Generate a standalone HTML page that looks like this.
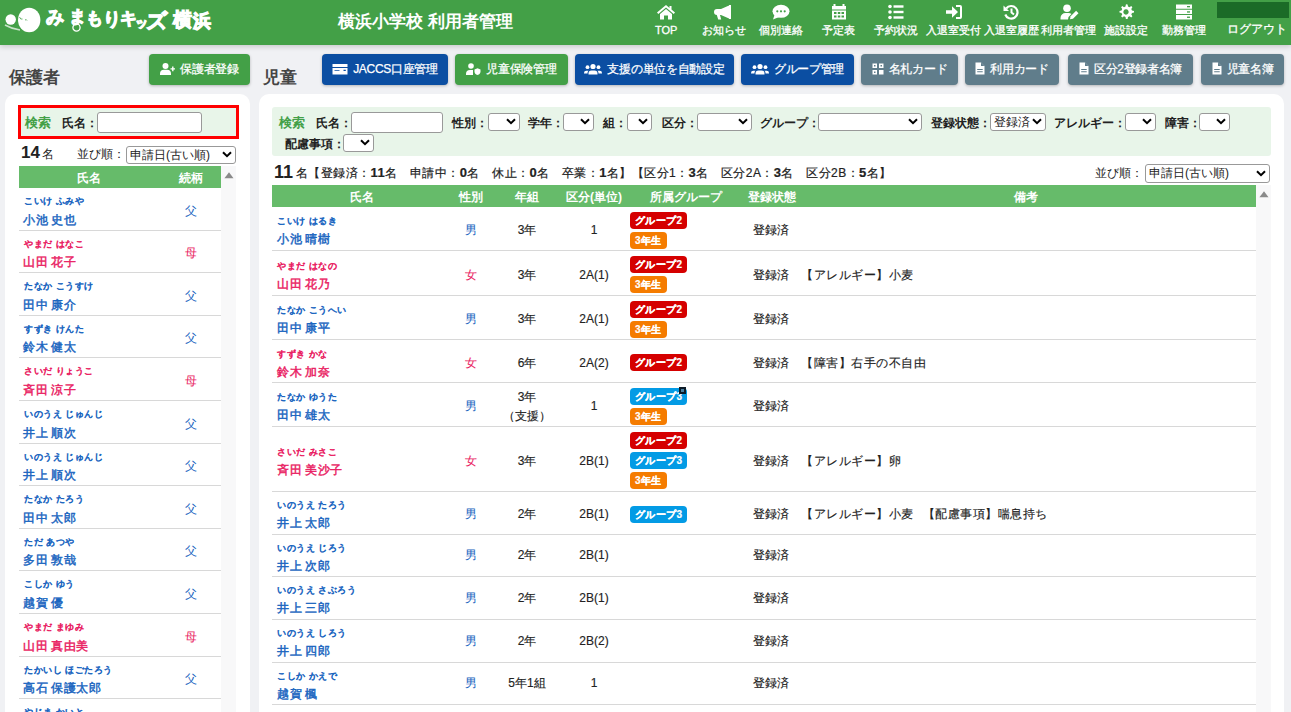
<!DOCTYPE html><html><head><meta charset="utf-8"><style>
*{box-sizing:border-box;margin:0;padding:0}
html,body{width:1291px;height:712px;overflow:hidden;background:#f0f1f4;font-family:"Liberation Sans",sans-serif;color:#222}
.abs{position:absolute}
.cnt b{font-size:13px}
.lg{font-weight:bold;color:#fff;white-space:nowrap;-webkit-text-stroke:1.1px #fff}
#hdr{position:absolute;left:0;top:0;width:1291px;height:45px;background:#43a047;box-shadow:0 2px 5px rgba(0,0,0,.16)}
.nav{position:absolute;top:0;width:58px;height:44px;text-align:center;color:#fff}
.nav svg{position:absolute;left:19px;top:4px}
.nav span{position:absolute;left:-10px;right:-10px;top:23px;font-size:11px;line-height:14px;white-space:nowrap;-webkit-text-stroke:0.3px #fff}
.title{position:absolute;font-size:17px;font-weight:bold;color:#444;line-height:20px}
.btn{position:absolute;top:54px;height:31px;border-radius:4px;color:#fff;font-size:12px;letter-spacing:-0.3px;-webkit-text-stroke:0.25px #fff;line-height:31px;text-align:center;box-shadow:0 1px 3px rgba(0,0,0,.25);white-space:nowrap}
.btn svg{vertical-align:-2px;margin-right:5px}
.card{position:absolute;background:#fff;border-radius:10px}
.lbl{position:absolute;font-size:12px;font-weight:bold;line-height:14px;white-space:nowrap;color:#222}
.sel{position:absolute;background:#fff;border:1px solid #999;border-radius:3px}
.sel .st{position:absolute;left:3px;top:0;font-size:12px;color:#222;line-height:17px;white-space:nowrap}
.sel .chev{position:absolute;right:3px;top:50%;margin-top:-4px}
.inp{position:absolute;background:#fff;border:1px solid #999;border-radius:3px}
.kana{position:absolute;font-size:9px;letter-spacing:0.5px;-webkit-text-stroke:0.55px currentColor;line-height:12px;white-space:nowrap}
.nm{position:absolute;font-size:12px;letter-spacing:0.6px;word-spacing:-1px;-webkit-text-stroke:0.45px currentColor;line-height:16px;white-space:nowrap}
.m{color:#1a65c0}.f{color:#e91e63}
.c.m,.c.f{-webkit-text-stroke:0}
.th{position:absolute;margin-top:1px;color:#fff;font-size:12px;font-weight:bold;line-height:22px;text-align:center;white-space:nowrap}
.row{position:absolute;border-bottom:1px solid #d8d8d8}
.c{position:absolute;-webkit-text-stroke:0.15px currentColor;font-size:12px;line-height:16px;text-align:center;white-space:nowrap}
.bd{position:absolute;height:17px;border-radius:4px;color:#fff;font-size:10px;letter-spacing:0.35px;font-weight:bold;-webkit-text-stroke:0.2px #fff;line-height:17px;padding:0 5px;white-space:nowrap}
.r{background:#d50000}.b{background:#039be5}.o{background:#f57c00}
</style></head><body>
<div id="hdr">
<svg class="abs" style="left:0;top:0" width="46" height="44" viewBox="0 0 46 44">
<ellipse cx="29.2" cy="20" rx="11.2" ry="12.2" fill="#fff"/>
<circle cx="10.7" cy="19.5" r="5.2" fill="#fff"/>
<path d="M5 25 Q12 29 20 30" stroke="#fff" stroke-width="1.5" fill="none" opacity=".7"/>
<path d="M19.5 17 q1 3 3 2 M25 20 q1.5-1 2 0.5" stroke="#43a047" stroke-width="0.8" fill="none"/>
</svg>
<div class="abs lg" style="left:45.5px;top:8px;font-size:18px;line-height:18px">み</div>
<div class="abs lg" style="left:68.5px;top:8px;font-size:17px;line-height:17px">ま</div>
<div class="abs lg" style="left:85.5px;top:10px;font-size:17px;line-height:17px">も</div>
<div class="abs lg" style="left:103px;top:10px;font-size:18px;line-height:18px">り</div>
<div class="abs lg" style="left:119.5px;top:10px;font-size:17px;line-height:17px">キ</div>
<div class="abs lg" style="left:135px;top:16px;font-size:13px;line-height:13px">ッ</div>
<div class="abs lg" style="left:146px;top:10px;font-size:21px;line-height:21px">ズ</div>
<div class="abs lg" style="left:173px;top:11px;font-size:18.5px;line-height:18.5px">横</div>
<div class="abs lg" style="left:193px;top:12px;font-size:18px;line-height:18px">浜</div>
<svg class="abs" style="left:71.5px;top:23px" width="9" height="9" viewBox="0 0 9 9"><circle cx="4.5" cy="4.5" r="3.6" fill="none" stroke="#fff" stroke-width="1.3"/></svg>
<div class="abs" style="left:338px;top:11px;font-size:17px;font-weight:bold;color:#fff;line-height:22px;white-space:nowrap">横浜小学校 利用者管理</div>
<div class="nav" style="left:637.25px"><svg width="20" height="16" viewBox="0 0 20 16"><path d="M10 1 L1 8.5 L2.3 10 L10 3.6 L17.7 10 L19 8.5 L15.5 5.6 V2 H13.5 V3.9 Z" fill="#fff"/><path d="M4 10 L10 5 L16 10 V15.5 H12 V11.5 H8 V15.5 H4 Z" fill="#fff"/></svg><span>TOP</span></div>
<div class="nav" style="left:694.75px"><svg width="20" height="16" viewBox="0 0 20 16"><path d="M15 1 h2 v14 h-2 z M3 5 h4 l8-3.5 v13 l-8-3.5 h-1 l1.2 4.5 h-3 l-1.4-4.5 H3 a3 3 0 0 1 0-6z" fill="#fff"/></svg><span>お知らせ</span></div>
<div class="nav" style="left:752.25px"><svg width="20" height="16" viewBox="0 0 20 16"><ellipse cx="10" cy="7.3" rx="8.5" ry="6.5" fill="#fff"/><path d="M3.5 11 L2 15.5 L8 13 Z" fill="#fff"/><circle cx="6.3" cy="7.3" r="1.1" fill="#43a047"/><circle cx="10" cy="7.3" r="1.1" fill="#43a047"/><circle cx="13.7" cy="7.3" r="1.1" fill="#43a047"/></svg><span>個別連絡</span></div>
<div class="nav" style="left:809.75px"><svg width="20" height="16" viewBox="0 0 20 16"><rect x="4.5" y="0" width="2" height="3" fill="#fff"/><rect x="13.5" y="0" width="2" height="3" fill="#fff"/><rect x="3" y="2" width="14" height="3.5" fill="#fff"/><path d="M3 6.5 h14 v9 h-14z M5 8 v2 h2.5 v-2z M8.8 8 v2 h2.5 v-2z M12.5 8 v2 h2.5 v-2z M5 11.5 v2 h2.5 v-2z M8.8 11.5 v2 h2.5 v-2z M12.5 11.5 v2 h2.5 v-2z" fill="#fff" fill-rule="evenodd"/></svg><span>予定表</span></div>
<div class="nav" style="left:867.25px"><svg width="20" height="16" viewBox="0 0 20 16"><circle cx="4" cy="2.5" r="1.8" fill="#fff"/><circle cx="4" cy="8" r="1.8" fill="#fff"/><circle cx="4" cy="13.5" r="1.8" fill="#fff"/><rect x="7.5" y="1.3" width="10" height="2.4" fill="#fff"/><rect x="7.5" y="6.8" width="10" height="2.4" fill="#fff"/><rect x="7.5" y="12.3" width="10" height="2.4" fill="#fff"/></svg><span>予約状況</span></div>
<div class="nav" style="left:924.75px"><svg width="20" height="16" viewBox="0 0 20 16"><path d="M2 6.3 h6 v-4 l6 5.7 l-6 5.7 v-4 h-6z" fill="#fff"/><path d="M12 1 h4 a2 2 0 0 1 2 2 v10 a2 2 0 0 1-2 2 h-4 v-2 h4 v-10 h-4z" fill="#fff"/></svg><span>入退室受付</span></div>
<div class="nav" style="left:982.25px"><svg width="20" height="16" viewBox="0 0 20 16"><path d="M5.2 4.5 A6.3 6.3 0 1 1 4.3 10.5" fill="none" stroke="#fff" stroke-width="2.2"/><path d="M2.5 1.5 L2.5 7 L8 7 Z" fill="#fff"/><path d="M10.5 4.5 v4 l2.5 2" fill="none" stroke="#fff" stroke-width="2"/></svg><span>入退室履歴</span></div>
<div class="nav" style="left:1039.75px"><svg width="20" height="16" viewBox="0 0 20 16"><circle cx="8" cy="4.2" r="3.8" fill="#fff"/><path d="M1.5 15.5 v-1.5 a5 5 0 0 1 5-5 h3 a5 5 0 0 1 3 1 l-3 3 l-0.5 2.5z" fill="#fff"/><path d="M11 15.3 l0.6-3 l5.5-5.5 l2.4 2.4 l-5.5 5.5z" fill="#fff"/></svg><span>利用者管理</span></div>
<div class="nav" style="left:1097.25px"><svg width="20" height="16" viewBox="0 0 20 16"><path d="M10 0.3 l1.6 0.2 l0.4 2 l1.5 0.7 l1.7-1.1 l1.2 1.2 l-1.1 1.7 l0.7 1.5 l2 0.4 v1.7 l-2 0.4 l-0.7 1.5 l1.1 1.7 l-1.2 1.2 l-1.7-1.1 l-1.5 0.7 l-0.4 2 h-1.7 l-0.4-2 l-1.5-0.7 l-1.7 1.1 l-1.2-1.2 l1.1-1.7 l-0.7-1.5 l-2-0.4 v-1.7 l2-0.4 l0.7-1.5 l-1.1-1.7 l1.2-1.2 l1.7 1.1 l1.5-0.7 l0.4-2z M10 5.3 a2.7 2.7 0 1 0 0.01 0z" fill="#fff" fill-rule="evenodd"/></svg><span>施設設定</span></div>
<div class="nav" style="left:1154.75px"><svg width="20" height="16" viewBox="0 0 20 16"><path d="M2 0.5 h16 v4.3 h-16z M2 5.8 h16 v4.3 h-16z M2 11.1 h16 v4.3 h-16z" fill="#fff"/><rect x="13" y="2" width="3" height="1.3" fill="#43a047"/><rect x="13" y="7.3" width="3" height="1.3" fill="#43a047"/><rect x="13" y="12.6" width="3" height="1.3" fill="#43a047"/></svg><span>勤務管理</span></div>
<div class="abs" style="left:1217px;top:2px;width:72px;height:16px;background:#1b6b27"></div>
<div class="abs" style="left:1217px;top:21px;width:80px;font-size:12px;color:#fff;line-height:16px;text-align:center;white-space:nowrap;-webkit-text-stroke:0.3px #fff">ログアウト</div>
</div>
<div class="title" style="left:9px;top:68px">保護者</div>
<div class="title" style="left:263px;top:68px">児童</div>
<div class="btn" style="left:149px;width:101px;background:#43a047"><svg width="15" height="12" viewBox="0 0 15 12"><circle cx="5.5" cy="3" r="3" fill="#fff"/><path d="M0 12 v-1.2 a4 4 0 0 1 4-4 h3 a4 4 0 0 1 4 4 v1.2z" fill="#fff"/><path d="M10.5 5.2 h1.6 v-1.6 h1.4 v1.6 h1.6 v1.4 h-1.6 v1.6 h-1.4 v-1.6 h-1.6z" fill="#fff"/></svg>保護者登録</div>
<div class="btn" style="left:322px;width:126px;background:#0b4ea2"><svg width="16" height="12" viewBox="0 0 16 12"><path d="M0.5 1 h15 v10.5 h-15z M0.5 4 v0.9 h15 v-0.9z M2.5 7 v0.7 h5 v-0.7z M11.5 6.8 v1.2 h2.3 v-1.2z" fill="#fff" fill-rule="evenodd"/></svg>JACCS口座管理</div>
<div class="btn" style="left:455px;width:113px;background:#43a047"><svg width="15" height="12" viewBox="0 0 15 12"><circle cx="5" cy="3" r="2.8" fill="#fff"/><path d="M0 12 v-1 a4 4 0 0 1 4-4 h3 v5z" fill="#fff"/><path d="M8.5 6.5 l3-1.2 l3 1.2 v2 a3.5 3.5 0 0 1-3 3.4 a3.5 3.5 0 0 1-3-3.4z" fill="#fff"/></svg>児童保険管理</div>
<div class="btn" style="left:575px;width:159px;background:#0b4ea2"><svg width="18" height="12" viewBox="0 0 18 12"><circle cx="9" cy="3.5" r="2.6" fill="#fff"/><circle cx="3.5" cy="4.2" r="1.9" fill="#fff"/><circle cx="14.5" cy="4.2" r="1.9" fill="#fff"/><path d="M4.5 11.5 v-1 a3 3 0 0 1 3-3 h3 a3 3 0 0 1 3 3 v1z" fill="#fff"/><path d="M0 10.5 v-0.5 a2.3 2.3 0 0 1 2.3-2.3 h2.2 a3.5 3.5 0 0 0-1 2.8z M18 10.5 v-0.5 a2.3 2.3 0 0 0-2.3-2.3 h-2.2 a3.5 3.5 0 0 1 1 2.8z" fill="#fff"/></svg>支援の単位を自動設定</div>
<div class="btn" style="left:741px;width:113px;background:#0b4ea2"><svg width="18" height="12" viewBox="0 0 18 12"><circle cx="9" cy="3.5" r="2.6" fill="#fff"/><circle cx="3.5" cy="4.2" r="1.9" fill="#fff"/><circle cx="14.5" cy="4.2" r="1.9" fill="#fff"/><path d="M4.5 11.5 v-1 a3 3 0 0 1 3-3 h3 a3 3 0 0 1 3 3 v1z" fill="#fff"/><path d="M0 10.5 v-0.5 a2.3 2.3 0 0 1 2.3-2.3 h2.2 a3.5 3.5 0 0 0-1 2.8z M18 10.5 v-0.5 a2.3 2.3 0 0 0-2.3-2.3 h-2.2 a3.5 3.5 0 0 1 1 2.8z" fill="#fff"/></svg>グループ管理</div>
<div class="btn" style="left:861px;width:97px;background:#607d8b"><svg width="12" height="12" viewBox="0 0 12 12"><path d="M0.5 0.5 h4.5 v4.5 h-4.5z M7 0.5 h4.5 v4.5 h-4.5z M0.5 7 h4.5 v4.5 h-4.5z M7 7 h4.5 v4.5 h-4.5z M2 2 v1.5 h1.5 v-1.5z M8.5 2 v1.5 h1.5 v-1.5z M2 8.5 v1.5 h1.5 v-1.5z" fill="#fff" fill-rule="evenodd"/></svg>名札カード</div>
<div class="btn" style="left:965px;width:94px;background:#607d8b"><svg width="10" height="13" viewBox="0 0 10 13"><path d="M0.5 0.5 h5.5 l3.5 3.5 v8.5 h-9z M2.2 7 v1 h5.5 v-1z M2.2 9.2 v1 h5.5 v-1z" fill="#fff" fill-rule="evenodd"/><path d="M6 0.5 v3.5 h3.5" fill="#607d8b"/></svg>利用カード</div>
<div class="btn" style="left:1068px;width:125px;background:#607d8b"><svg width="10" height="13" viewBox="0 0 10 13"><path d="M0.5 0.5 h5.5 l3.5 3.5 v8.5 h-9z M2.2 7 v1 h5.5 v-1z M2.2 9.2 v1 h5.5 v-1z" fill="#fff" fill-rule="evenodd"/><path d="M6 0.5 v3.5 h3.5" fill="#607d8b"/></svg>区分2登録者名簿</div>
<div class="btn" style="left:1201px;width:83px;background:#607d8b"><svg width="10" height="13" viewBox="0 0 10 13"><path d="M0.5 0.5 h5.5 l3.5 3.5 v8.5 h-9z M2.2 7 v1 h5.5 v-1z M2.2 9.2 v1 h5.5 v-1z" fill="#fff" fill-rule="evenodd"/><path d="M6 0.5 v3.5 h3.5" fill="#607d8b"/></svg>児童名簿</div>
<div class="card" style="left:5px;top:94px;width:245px;height:640px"></div>
<div class="abs" style="left:18px;top:105px;width:221px;height:34px;border:3px solid #f00;background:#e8f5e9"></div>
<div class="abs" style="left:25px;top:115px;font-size:13px;font-weight:bold;color:#43a047;line-height:16px">検索</div>
<div class="lbl" style="left:62px;top:116px">氏名：</div>
<div class="inp" style="left:97px;top:112px;width:105px;height:21px"></div>
<div class="abs" style="left:21px;top:144px;font-size:17px;font-weight:bold;line-height:18px">14</div>
<div class="abs" style="left:42px;top:147px;font-size:12px;line-height:14px">名</div>
<div class="abs" style="left:77px;top:147px;font-size:12px;line-height:14px">並び順：</div>
<div class="sel" style="left:126px;top:146px;width:110px;height:18px"><span class="st">申請日(古い順)</span><svg class="chev" width="10" height="7" viewBox="0 0 10 7"><path d="M1 1.2 L5 5.2 L9 1.2" fill="none" stroke="#000" stroke-width="2"/></svg></div>
<div class="abs" style="left:19px;top:166px;width:202px;height:22px;background:#66bb6a"></div>
<div class="th" style="left:19px;top:166px;width:140px">氏名</div>
<div class="th" style="left:161px;top:166px;width:60px">続柄</div>
<div class="abs" style="left:221px;top:166px;width:15px;height:560px;background:#f8f8f9"></div>
<svg class="abs" style="left:223.5px;top:170.5px" width="10" height="8" viewBox="0 0 11 8"><path d="M0.5 7.5 L5.5 1 L10.5 7.5Z" fill="#8a8a8a"/></svg>
<div class="row" style="left:19px;top:188.0px;width:202px;height:42.6px"><div class="kana m" style="left:5px;top:7px">こいけ ふみや</div><div class="nm m" style="left:4px;top:23.5px">小池 史也</div><div class="c m" style="left:142px;width:60px;top:14.5px">父</div></div>
<div class="row" style="left:19px;top:230.6px;width:202px;height:42.6px"><div class="kana f" style="left:5px;top:7px">やまだ はなこ</div><div class="nm f" style="left:4px;top:23.5px">山田 花子</div><div class="c f" style="left:142px;width:60px;top:14.5px">母</div></div>
<div class="row" style="left:19px;top:273.2px;width:202px;height:42.6px"><div class="kana m" style="left:5px;top:7px">たなか こうすけ</div><div class="nm m" style="left:4px;top:23.5px">田中 康介</div><div class="c m" style="left:142px;width:60px;top:14.5px">父</div></div>
<div class="row" style="left:19px;top:315.8px;width:202px;height:42.6px"><div class="kana m" style="left:5px;top:7px">すずき けんた</div><div class="nm m" style="left:4px;top:23.5px">鈴木 健太</div><div class="c m" style="left:142px;width:60px;top:14.5px">父</div></div>
<div class="row" style="left:19px;top:358.4px;width:202px;height:42.6px"><div class="kana f" style="left:5px;top:7px">さいだ りょうこ</div><div class="nm f" style="left:4px;top:23.5px">斉田 涼子</div><div class="c f" style="left:142px;width:60px;top:14.5px">母</div></div>
<div class="row" style="left:19px;top:401.0px;width:202px;height:42.6px"><div class="kana m" style="left:5px;top:7px">いのうえ じゅんじ</div><div class="nm m" style="left:4px;top:23.5px">井上 順次</div><div class="c m" style="left:142px;width:60px;top:14.5px">父</div></div>
<div class="row" style="left:19px;top:443.6px;width:202px;height:42.6px"><div class="kana m" style="left:5px;top:7px">いのうえ じゅんじ</div><div class="nm m" style="left:4px;top:23.5px">井上 順次</div><div class="c m" style="left:142px;width:60px;top:14.5px">父</div></div>
<div class="row" style="left:19px;top:486.2px;width:202px;height:42.6px"><div class="kana m" style="left:5px;top:7px">たなか たろう</div><div class="nm m" style="left:4px;top:23.5px">田中 太郎</div><div class="c m" style="left:142px;width:60px;top:14.5px">父</div></div>
<div class="row" style="left:19px;top:528.8px;width:202px;height:42.6px"><div class="kana m" style="left:5px;top:7px">ただ あつや</div><div class="nm m" style="left:4px;top:23.5px">多田 敦哉</div><div class="c m" style="left:142px;width:60px;top:14.5px">父</div></div>
<div class="row" style="left:19px;top:571.4px;width:202px;height:42.6px"><div class="kana m" style="left:5px;top:7px">こしか ゆう</div><div class="nm m" style="left:4px;top:23.5px">越賀 優</div><div class="c m" style="left:142px;width:60px;top:14.5px">父</div></div>
<div class="row" style="left:19px;top:614.0px;width:202px;height:42.6px"><div class="kana f" style="left:5px;top:7px">やまだ まゆみ</div><div class="nm f" style="left:4px;top:23.5px">山田 真由美</div><div class="c f" style="left:142px;width:60px;top:14.5px">母</div></div>
<div class="row" style="left:19px;top:656.6px;width:202px;height:42.6px"><div class="kana m" style="left:5px;top:7px">たかいし ほごたろう</div><div class="nm m" style="left:4px;top:23.5px">高石 保護太郎</div><div class="c m" style="left:142px;width:60px;top:14.5px">父</div></div>
<div class="row" style="left:19px;top:699.2px;width:202px;height:42.6px"><div class="kana m" style="left:5px;top:7px">やじま かいと</div><div class="nm m" style="left:4px;top:23.5px">矢島 海斗</div><div class="c m" style="left:142px;width:60px;top:14.5px">父</div></div>
<div class="card" style="left:259px;top:94px;width:1025px;height:640px"></div>
<div class="abs" style="left:272px;top:107px;width:999px;height:49px;background:#e8f5e9;border-radius:3px"></div>
<div class="abs" style="left:279px;top:115px;font-size:13px;font-weight:bold;color:#43a047;line-height:16px">検索</div>
<div class="lbl" style="left:316px;top:116px">氏名：</div>
<div class="inp" style="left:351px;top:112px;width:92px;height:21px"></div>
<div class="lbl" style="left:452px;top:116px">性別：</div>
<div class="sel" style="left:488px;top:113px;width:32px;height:18px"><span class="st"></span><svg class="chev" width="10" height="7" viewBox="0 0 10 7"><path d="M1 1.2 L5 5.2 L9 1.2" fill="none" stroke="#000" stroke-width="2"/></svg></div>
<div class="lbl" style="left:528px;top:116px">学年：</div>
<div class="sel" style="left:563px;top:113px;width:31px;height:18px"><span class="st"></span><svg class="chev" width="10" height="7" viewBox="0 0 10 7"><path d="M1 1.2 L5 5.2 L9 1.2" fill="none" stroke="#000" stroke-width="2"/></svg></div>
<div class="lbl" style="left:603px;top:116px">組：</div>
<div class="sel" style="left:627px;top:113px;width:25px;height:18px"><span class="st"></span><svg class="chev" width="10" height="7" viewBox="0 0 10 7"><path d="M1 1.2 L5 5.2 L9 1.2" fill="none" stroke="#000" stroke-width="2"/></svg></div>
<div class="lbl" style="left:662px;top:116px">区分：</div>
<div class="sel" style="left:697px;top:113px;width:55px;height:18px"><span class="st"></span><svg class="chev" width="10" height="7" viewBox="0 0 10 7"><path d="M1 1.2 L5 5.2 L9 1.2" fill="none" stroke="#000" stroke-width="2"/></svg></div>
<div class="lbl" style="left:760px;top:116px">グループ：</div>
<div class="sel" style="left:818px;top:113px;width:104px;height:18px"><span class="st"></span><svg class="chev" width="10" height="7" viewBox="0 0 10 7"><path d="M1 1.2 L5 5.2 L9 1.2" fill="none" stroke="#000" stroke-width="2"/></svg></div>
<div class="lbl" style="left:931px;top:116px">登録状態：</div>
<div class="sel" style="left:990px;top:113px;width:56px;height:18px"><span class="st">登録済</span><svg class="chev" width="10" height="7" viewBox="0 0 10 7"><path d="M1 1.2 L5 5.2 L9 1.2" fill="none" stroke="#000" stroke-width="2"/></svg></div>
<div class="lbl" style="left:1054px;top:116px">アレルギー：</div>
<div class="sel" style="left:1125px;top:113px;width:31px;height:18px"><span class="st"></span><svg class="chev" width="10" height="7" viewBox="0 0 10 7"><path d="M1 1.2 L5 5.2 L9 1.2" fill="none" stroke="#000" stroke-width="2"/></svg></div>
<div class="lbl" style="left:1165px;top:116px">障害：</div>
<div class="sel" style="left:1199px;top:113px;width:31px;height:18px"><span class="st"></span><svg class="chev" width="10" height="7" viewBox="0 0 10 7"><path d="M1 1.2 L5 5.2 L9 1.2" fill="none" stroke="#000" stroke-width="2"/></svg></div>
<div class="lbl" style="left:285px;top:137px">配慮事項：</div>
<div class="sel" style="left:343px;top:134px;width:31px;height:18px"><span class="st"></span><svg class="chev" width="10" height="7" viewBox="0 0 10 7"><path d="M1 1.2 L5 5.2 L9 1.2" fill="none" stroke="#000" stroke-width="2"/></svg></div>
<div class="abs" style="left:274px;top:163px;font-size:18px;font-weight:bold;line-height:18px">11</div>
<div class="abs cnt" style="left:296px;top:166px;font-size:12px;letter-spacing:0.42px;line-height:14px;white-space:nowrap;-webkit-text-stroke:0.2px #222">名【登録済：<b>11</b>名　申請中：<b>0</b>名　休止：<b>0</b>名　卒業：<b>1</b>名】【区分1：<b>3</b>名　区分2A：<b>3</b>名　区分2B：<b>5</b>名】</div>
<div class="abs" style="left:1095px;top:166px;font-size:12px;line-height:14px">並び順：</div>
<div class="sel" style="left:1145px;top:164px;width:125px;height:19px"><span class="st">申請日(古い順)</span><svg class="chev" width="10" height="7" viewBox="0 0 10 7"><path d="M1 1.2 L5 5.2 L9 1.2" fill="none" stroke="#000" stroke-width="2"/></svg></div>
<div class="abs" style="left:272px;top:185px;width:984px;height:22px;background:#66bb6a"></div>
<div class="th" style="left:272px;top:185px;width:180px">氏名</div>
<div class="th" style="left:452px;top:185px;width:38px">性別</div>
<div class="th" style="left:490px;top:185px;width:74px">年組</div>
<div class="th" style="left:564px;top:185px;width:60px">区分(単位)</div>
<div class="th" style="left:624px;top:185px;width:124px">所属グループ</div>
<div class="th" style="left:748px;top:185px;width:48px">登録状態</div>
<div class="th" style="left:796px;top:185px;width:460px">備考</div>
<div class="abs" style="left:1256px;top:185px;width:15px;height:540px;background:#f8f8f9"></div>
<svg class="abs" style="left:1258.5px;top:189.5px" width="10" height="8" viewBox="0 0 11 8"><path d="M0.5 7.5 L5.5 1 L10.5 7.5Z" fill="#8a8a8a"/></svg>
<div class="row" style="left:272px;top:207px;width:984px;height:44px"><div class="kana m" style="left:5px;top:8.0px">こいけ はるき</div><div class="nm m" style="left:5px;top:24.0px">小池 晴樹</div><div class="c m" style="left:180px;width:38px;top:15.0px">男</div><div class="c" style="left:218px;width:74px;top:15.0px">3年</div><div class="c" style="left:292px;width:60px;top:15.0px">1</div><div class="bd r" style="left:358px;top:4.5px">グループ2</div><div class="bd o" style="left:358px;top:24.5px">3年生</div><div class="c" style="left:481px;top:15.0px;text-align:left">登録済</div></div>
<div class="row" style="left:272px;top:251px;width:984px;height:45px"><div class="kana f" style="left:5px;top:8.5px">やまだ はなの</div><div class="nm f" style="left:5px;top:24.5px">山田 花乃</div><div class="c f" style="left:180px;width:38px;top:15.5px">女</div><div class="c" style="left:218px;width:74px;top:15.5px">3年</div><div class="c" style="left:292px;width:60px;top:15.5px">2A(1)</div><div class="bd r" style="left:358px;top:5.0px">グループ2</div><div class="bd o" style="left:358px;top:25.0px">3年生</div><div class="c" style="left:481px;top:15.5px;text-align:left">登録済</div><div class="c" style="left:529px;top:15.5px;text-align:left;letter-spacing:0.5px">【アレルギー】小麦</div></div>
<div class="row" style="left:272px;top:296px;width:984px;height:44px"><div class="kana m" style="left:5px;top:8.0px">たなか こうへい</div><div class="nm m" style="left:5px;top:24.0px">田中 康平</div><div class="c m" style="left:180px;width:38px;top:15.0px">男</div><div class="c" style="left:218px;width:74px;top:15.0px">3年</div><div class="c" style="left:292px;width:60px;top:15.0px">2A(1)</div><div class="bd r" style="left:358px;top:4.5px">グループ2</div><div class="bd o" style="left:358px;top:24.5px">3年生</div><div class="c" style="left:481px;top:15.0px;text-align:left">登録済</div></div>
<div class="row" style="left:272px;top:340px;width:984px;height:43px"><div class="kana f" style="left:5px;top:7.5px">すずき かな</div><div class="nm f" style="left:5px;top:23.5px">鈴木 加奈</div><div class="c f" style="left:180px;width:38px;top:14.5px">女</div><div class="c" style="left:218px;width:74px;top:14.5px">6年</div><div class="c" style="left:292px;width:60px;top:14.5px">2A(2)</div><div class="bd r" style="left:358px;top:14.0px">グループ2</div><div class="c" style="left:481px;top:14.5px;text-align:left">登録済</div><div class="c" style="left:529px;top:14.5px;text-align:left;letter-spacing:0.5px">【障害】右手の不自由</div></div>
<div class="row" style="left:272px;top:383px;width:984px;height:44px"><div class="kana m" style="left:5px;top:8.0px">たなか ゆうた</div><div class="nm m" style="left:5px;top:24.0px">田中 雄太</div><div class="c m" style="left:180px;width:38px;top:15.0px">男</div><div class="c" style="left:218px;width:74px;top:5.5px">3年</div><div class="c" style="left:218px;width:74px;top:24.5px">（支援）</div><div class="c" style="left:292px;width:60px;top:15.0px">1</div><div class="bd b" style="left:358px;top:4.5px">グループ3<span style="position:absolute;right:1px;top:-1px;width:7px;height:7px;background:#0c1c28;border:2px solid #0c1c28"><span style="display:block;width:3px;height:3px;background:#4a7fa0"></span></span></div><div class="bd o" style="left:358px;top:24.5px">3年生</div><div class="c" style="left:481px;top:15.0px;text-align:left">登録済</div></div>
<div class="row" style="left:272px;top:427px;width:984px;height:65px"><div class="kana f" style="left:5px;top:18.5px">さいだ みさこ</div><div class="nm f" style="left:5px;top:34.5px">斉田 美沙子</div><div class="c f" style="left:180px;width:38px;top:25.5px">女</div><div class="c" style="left:218px;width:74px;top:25.5px">3年</div><div class="c" style="left:292px;width:60px;top:25.5px">2B(1)</div><div class="bd r" style="left:358px;top:5.0px">グループ2</div><div class="bd b" style="left:358px;top:25.0px">グループ3</div><div class="bd o" style="left:358px;top:45.0px">3年生</div><div class="c" style="left:481px;top:25.5px;text-align:left">登録済</div><div class="c" style="left:529px;top:25.5px;text-align:left;letter-spacing:0.5px">【アレルギー】卵</div></div>
<div class="row" style="left:272px;top:492px;width:984px;height:42.5px"><div class="kana m" style="left:5px;top:7.2px">いのうえ たろう</div><div class="nm m" style="left:5px;top:23.2px">井上 太郎</div><div class="c m" style="left:180px;width:38px;top:14.2px">男</div><div class="c" style="left:218px;width:74px;top:14.2px">2年</div><div class="c" style="left:292px;width:60px;top:14.2px">2B(1)</div><div class="bd b" style="left:358px;top:13.8px">グループ3</div><div class="c" style="left:481px;top:14.2px;text-align:left">登録済</div><div class="c" style="left:529px;top:14.2px;text-align:left;letter-spacing:0.5px">【アレルギー】小麦<span style="margin-left:9px">【配慮事項】喘息持ち</span></div></div>
<div class="row" style="left:272px;top:534.5px;width:984px;height:42.5px"><div class="kana m" style="left:5px;top:7.2px">いのうえ じろう</div><div class="nm m" style="left:5px;top:23.2px">井上 次郎</div><div class="c m" style="left:180px;width:38px;top:12.9px">男</div><div class="c" style="left:218px;width:74px;top:12.9px">2年</div><div class="c" style="left:292px;width:60px;top:12.9px">2B(1)</div><div class="c" style="left:481px;top:12.9px;text-align:left">登録済</div></div>
<div class="row" style="left:272px;top:577px;width:984px;height:42.5px"><div class="kana m" style="left:5px;top:7.2px">いのうえ さぶろう</div><div class="nm m" style="left:5px;top:23.2px">井上 三郎</div><div class="c m" style="left:180px;width:38px;top:12.9px">男</div><div class="c" style="left:218px;width:74px;top:12.9px">2年</div><div class="c" style="left:292px;width:60px;top:12.9px">2B(1)</div><div class="c" style="left:481px;top:12.9px;text-align:left">登録済</div></div>
<div class="row" style="left:272px;top:619.5px;width:984px;height:43.0px"><div class="kana m" style="left:5px;top:7.5px">いのうえ しろう</div><div class="nm m" style="left:5px;top:23.5px">井上 四郎</div><div class="c m" style="left:180px;width:38px;top:13.2px">男</div><div class="c" style="left:218px;width:74px;top:13.2px">2年</div><div class="c" style="left:292px;width:60px;top:13.2px">2B(2)</div><div class="c" style="left:481px;top:13.2px;text-align:left">登録済</div></div>
<div class="row" style="left:272px;top:662.5px;width:984px;height:42.5px"><div class="kana m" style="left:5px;top:7.2px">こしか かえで</div><div class="nm m" style="left:5px;top:23.2px">越賀 楓</div><div class="c m" style="left:180px;width:38px;top:12.9px">男</div><div class="c" style="left:218px;width:74px;top:12.9px">5年1組</div><div class="c" style="left:292px;width:60px;top:12.9px">1</div><div class="c" style="left:481px;top:12.9px;text-align:left">登録済</div></div>
<div class="row" style="left:272px;top:705px;width:984px;height:43px"><div class="kana m" style="left:5px;top:7.5px">やじま そら</div><div class="nm m" style="left:5px;top:23.5px">矢島 空</div><div class="c m" style="left:180px;width:38px;top:13.2px">男</div><div class="c" style="left:218px;width:74px;top:13.2px">1年</div><div class="c" style="left:292px;width:60px;top:13.2px">1</div><div class="c" style="left:481px;top:13.2px;text-align:left">登録済</div></div>
</body></html>
